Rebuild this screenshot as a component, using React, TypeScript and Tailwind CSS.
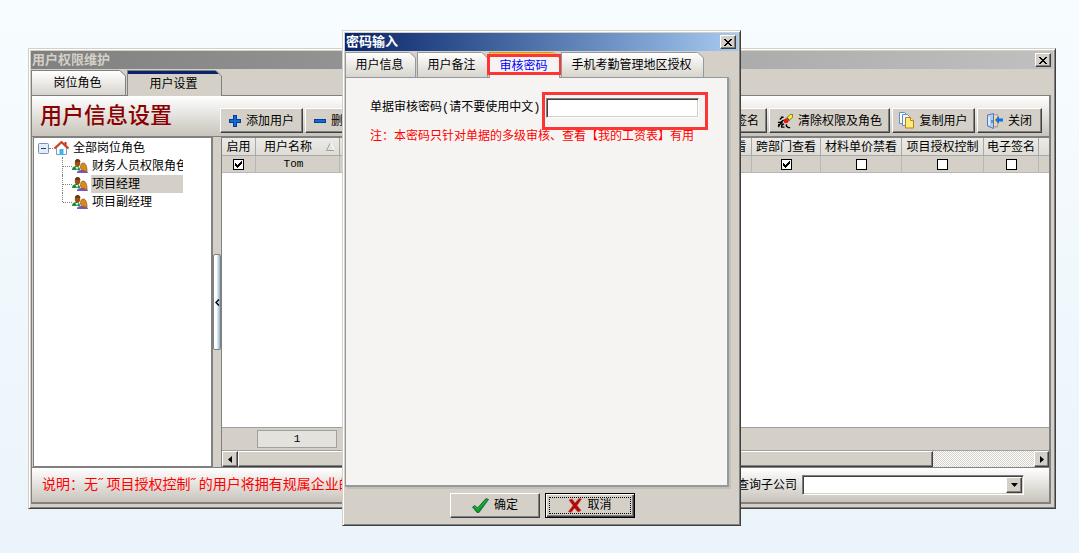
import type { ReactNode } from "react";

type Column = {
  label: string;
  width: string;
  checked?: boolean;
};

const rightColumns: Column[] = [
  { label: "跨部门查看", width: "w-[69px]", checked: true },
  { label: "材料单价禁看", width: "w-[81px]", checked: false },
  { label: "项目授权控制", width: "w-[82px]", checked: false },
  { label: "电子签名", width: "w-[55px]", checked: false },
];

const roles = [
  { name: "财务人员权限角色", selected: false },
  { name: "项目经理", selected: true },
  { name: "项目副经理", selected: false },
];

const raised =
  "border border-t-white border-l-white border-r-[#404040] border-b-[#404040] bg-[#d4d0c8] shadow-[inset_-1px_-1px_0_#808080]";
const frame =
  "border border-t-[#d4d0c8] border-l-[#d4d0c8] border-r-[#404040] border-b-[#404040] bg-[#d4d0c8] shadow-[inset_1px_1px_0_#fff,inset_-1px_-1px_0_#808080]";
const sunken =
  "border border-t-[#808080] border-l-[#808080] border-r-white border-b-white bg-white shadow-[inset_1px_1px_0_#404040,inset_-1px_-1px_0_#d4d0c8]";

function CloseButton({ label }: { label: string }) {
  return (
    <button
      aria-label={label}
      className={`flex h-[14px] w-4 items-center justify-center ${raised}`}
    >
      <svg width="8" height="7" viewBox="0 0 8 7" shapeRendering="crispEdges">
        <path
          d="M0 0h2v1h1v1h2v-1h1v-1h2v1h-1v1h-1v1h-1v1h1v1h1v1h1v1h-2v-1h-1v-1h-2v1h-1v1h-2v-1h1v-1h1v-1h1v-1h-1v-1h-1v-1h-1z"
          fill="#000"
        />
      </svg>
    </button>
  );
}

function Tab({
  children,
  width,
  line,
  active,
  fill,
}: {
  children: ReactNode;
  width: string;
  line: string;
  active?: string;
  fill?: string;
}) {
  return (
    <button
      role="tab"
      aria-selected={!!active}
      className={`relative border-x border-t pr-[2px] text-xs ${width} ${line} ${
        active
          ? `h-[26px] ${active}`
          : "h-[25px] bg-linear-to-b from-white to-[#d8d4cd]"
      }`}
    >
      {children}
      <svg
        className="absolute -top-px -right-px"
        width="7"
        height="7"
        viewBox="0 0 7 7"
      >
        <path d="M0 0h7v7z" fill="#d4d0c8" />
        <path d="M1 0.5L6.5 6V7" stroke={fill} fill="none" />
      </svg>
    </button>
  );
}

function ToolButton({
  icon,
  label,
  width,
}: {
  icon: ReactNode;
  label: string;
  width: string;
}) {
  return (
    <button
      className={`flex h-[25px] shrink-0 items-center justify-center gap-[5px] text-xs whitespace-nowrap ${width} ${raised}`}
    >
      {icon}
      {label}
    </button>
  );
}

function PlusIcon() {
  return (
    <svg width="12" height="12" viewBox="0 0 12 12" shapeRendering="crispEdges">
      <path
        d="M4.500 .5h3v4h4v3h-4v4h-3v-4h-4v-3h4z"
        fill="#0a6cdc"
        stroke="#0a3c96"
      />
    </svg>
  );
}

function MinusIcon() {
  return (
    <svg width="12" height="12" viewBox="0 0 12 12" shapeRendering="crispEdges">
      <path d="M.5 4.500h11v3h-11z" fill="#0a6cdc" stroke="#0a3c96" />
    </svg>
  );
}

function EraserIcon() {
  return (
    <svg width="16" height="16" viewBox="0 0 17 16">
      <path d="M9.500 5.500L14 1h2.500v3L11.500 9z" fill="#ffee10" stroke="#333" strokeWidth=".6" />
      <path d="M10.500 4.500l2.500 3" stroke="#555" strokeWidth="1.500" />
      <circle cx="9.500" cy="8" r="2.500" fill="#f01010" />
      <path
        d="M4 4h3M3 6.500l2-2M1 9.500h3l3-2.500M6 9.500l-3 2-1.500 3M7.500 11l-2.500 1.500v2h3M10 11.500v2l2 1.500h2M1 12h1"
        stroke="#000"
        strokeWidth="1.500"
        fill="none"
      />
    </svg>
  );
}

function CopyIcon() {
  return (
    <svg width="15" height="17" viewBox="0 0 15 17">
      <path d="M.5 .5h5l2 2v9h-7z" fill="#fff" stroke="#5b93c8" />
      <path d="M3.500 2.500h5l2 2v9h-7z" fill="#eef6ff" stroke="#5b93c8" />
      <path d="M6.500 5.500h5l3 3v7.500h-8z" fill="#ffea78" stroke="#b98014" />
      <path d="M11.500 5.500v3h3" fill="#fff6c4" stroke="#b98014" />
    </svg>
  );
}

function ExitIcon() {
  return (
    <svg width="16" height="16" viewBox="0 0 16 16">
      <path d="M4 1.500h6.500v12H4z" fill="#f5d58c" stroke="#9aa6d8" />
      <path d="M.5 2L6.500 .5v15L.5 13z" fill="#a8d0f4" stroke="#5c74c0" />
      <path d="M2 3.500v8.500" stroke="#eef8ff" strokeWidth="1.500" />
      <path d="M5 7v3" stroke="#3c4c90" />
      <path d="M8 7l4-4v2.500h4v3h-4V11z" fill="#1070e0" />
      <path d="M8 14h3" stroke="#d0a050" />
    </svg>
  );
}

function SignIcon() {
  return (
    <svg width="14" height="14" viewBox="0 0 14 14">
      <path d="M1 13l2-4 8-8 2 2-8 8z" fill="#ffd24a" stroke="#805010" />
    </svg>
  );
}

function HouseIcon() {
  return (
    <svg width="15" height="14" viewBox="0 0 15 14">
      <path d="M2.500 7v6.500h10V7L7.500 2z" fill="#fff" stroke="#7a9cc0" />
      <path d="M5.500 8h4v6h-4z" fill="#38b4f0" />
      <path d="M10.500 1h2v4h-2z" fill="#c03020" />
      <path d="M.5 7.500l7-6.500 7 6.500" stroke="#e03c18" strokeWidth="2" fill="none" />
    </svg>
  );
}

function UsersIcon() {
  return (
    <svg width="16" height="15" viewBox="0 0 16 15">
      <path d="M5 14c0-2 1-3 5-3s6 1 6 3z" fill="#7058d0" />
      <path d="M8.500 9c0-4 1-5 3-5s3.500 3 3.500 8l-2 1-1-2-2 1z" fill="#d88a20" stroke="#8c5010" strokeWidth=".7" />
      <path d="M0 11c0-3 2-4 4.500-4S8 9 8 11z" fill="#189030" />
      <path d="M3.500 8l1.500 3 1.500-3z" fill="#e8f4e8" />
      <ellipse cx="5.500" cy="4" rx="2.700" ry="3.700" fill="#9a4e18" />
      <path d="M3 3c0-4 5-4 5.500 0z" fill="#6c3810" />
    </svg>
  );
}

function CheckIcon() {
  return (
    <svg width="17" height="15" viewBox="0 0 17 15">
      <path d="M.5 9l2.500-1.500 2.500 2.500L14 .5l2.500 1L7 14.500H5z" fill="#0a9a14" stroke="#0c3c80" strokeWidth=".7" />
      <path d="M2 8.500l3.500 3L15 1.500" stroke="#20c820" fill="none" />
    </svg>
  );
}

function CrossIcon() {
  return (
    <svg width="14" height="15" viewBox="0 0 14 15">
      <path
        d="M1 2l3-1 3 4 4-4.500 2.500 .5L9 7.500l4 5-3 1.500-3.500-4L3 14.500l-2.500-1L5 7.500z"
        fill="#a80c0c"
        stroke="#e03828"
        strokeWidth=".7"
      />
    </svg>
  );
}

function GridCheck({ label, checked }: { label: string; checked?: boolean }) {
  return (
    <span className="relative mx-auto block size-[11px]">
      <input
        type="checkbox"
        aria-label={label}
        defaultChecked={checked}
        className="peer block size-[11px] appearance-none border border-black bg-white"
      />
      <svg
        className="pointer-events-none absolute inset-0 hidden peer-checked:block"
        width="11"
        height="11"
        viewBox="0 0 11 11"
        shapeRendering="crispEdges"
      >
        <path
          d="M2 4h1v1h1v1h1v-1h1v-1h1v-1h1v-1h1v3h-1v1h-1v1h-1v1h-1v1h-1v-1h-1v-1h-1z"
          fill="#000"
        />
      </svg>
    </span>
  );
}

function RoleTree() {
  return (
    <div className="ml-px w-[180px] shrink-0 border border-r-2 border-[#808080] bg-white pt-px text-xs leading-[18px]">
      <div className="flex h-[18px] items-center pl-1">
        <svg width="11" height="11" viewBox="0 0 11 11">
          <rect x=".5" y=".5" width="10" height="10" rx="1" fill="#e4ecf6" stroke="#7890b4" />
          <path d="M3 5.500h5" stroke="#203c78" />
        </svg>
        <span className="mr-px w-1 border-t border-dotted border-[#808080]" />
        <HouseIcon />
        <span className="ml-1">全部岗位角色</span>
      </div>
      <ul className="ml-7">
        {roles.map((role, idx) => (
          <li key={role.name} className="flex h-[18px] items-center">
            <span
              className={`w-px self-start border-l border-dotted border-[#808080] ${
                idx === roles.length - 1 ? "h-[9px]" : "h-[18px]"
              }`}
            />
            <span className="w-[9px] border-t border-dotted border-[#808080]" />
            <UsersIcon />
            <span
              className={`ml-[3px] w-[92px] overflow-hidden pl-px whitespace-nowrap ${
                role.selected ? "bg-[#d4d0c8]" : ""
              }`}
            >
              {role.name}
            </span>
          </li>
        ))}
      </ul>
    </div>
  );
}

function Splitter() {
  return (
    <div className="flex w-2 shrink-0 items-center bg-[#d4d0c8]">
      <button
        aria-label="折叠"
        className="flex h-24 w-2 items-center justify-center rounded-xs border border-[#808080] bg-linear-to-r from-white from-40% to-[#8cb4cc]"
      >
        <svg width="5" height="7" viewBox="0 0 5 7">
          <path d="M4 0.500L1 3.500l3 3" stroke="#000" strokeWidth="1.500" fill="none" />
        </svg>
      </button>
    </div>
  );
}

function UserGrid() {
  const head =
    "h-[18px] overflow-hidden border-r border-[#a8a8a8] p-0 text-center font-normal whitespace-nowrap";
  const cell = "h-[17px] border-r border-b border-[#b8b8b8] p-0 text-center";
  return (
    <div className="flex min-w-0 flex-1 flex-col border-t border-l border-[#808080] bg-white">
      <table className="w-full table-fixed border-separate border-spacing-0 text-xs leading-4">
        <thead className="bg-linear-to-b from-[#ecebe7] to-[#dedbd5]">
          <tr>
            <th className={`w-[34px] border-b ${head}`}>启用</th>
            <th className={`w-[84px] border-b ${head}`}>
              <span className="flex items-center justify-between pr-1 pl-2">
                用户名称
                <svg width="9" height="9" viewBox="0 0 9 9">
                  <path d="M4.500 .5L.5 8.500h8" stroke="#a0a0a0" fill="none" />
                  <path d="M8.500 8.500l-4-8" stroke="#fff" fill="none" />
                </svg>
              </span>
            </th>
            <th className={`border-b ${head}`} />
            <th className={`w-[70px] border-b ${head}`}>跨公司查看</th>
            {rightColumns.map((col) => (
              <th key={col.label} className={`border-b ${head} ${col.width}`}>
                {col.label}
              </th>
            ))}
            <th className="w-[10px] border-b border-[#a8a8a8] p-0" />
          </tr>
        </thead>
        <tbody className="bg-[#d4d0c8]">
          <tr>
            <td className={cell}>
              <GridCheck label="启用" checked />
            </td>
            <td className={`${cell} pr-2 font-['Liberation_Mono',monospace] text-[11px]`}>
              Tom
            </td>
            <td className={cell} />
            <td className={cell} />
            {rightColumns.map((col) => (
              <td key={col.label} className={cell}>
                <GridCheck label={col.label} checked={col.checked} />
              </td>
            ))}
            <td className="border-b border-[#b8b8b8] p-0" />
          </tr>
        </tbody>
      </table>

      {/* Record count */}
      <div className="mt-auto flex h-6 items-center border-y border-[#a0a0a0] bg-[#d4d0c8] pl-[35px]">
        <span className="h-[18px] w-20 border border-[#a0a0a0] bg-[#e4e2dc] text-center font-['Liberation_Mono',monospace] text-[11px] leading-4">
          1
        </span>
      </div>

      {/* Horizontal scrollbar */}
      <div className="flex h-4 bg-[repeating-conic-gradient(#d4d0c8_0_25%,#fff_0_50%)] bg-size-[2px_2px]">
        <button
          aria-label="向左滚动"
          className={`flex w-4 items-center justify-center ${raised}`}
        >
          <svg width="4" height="7" viewBox="0 0 4 7">
            <path d="M4 0v7L0 3.500z" />
          </svg>
        </button>
        <div className={`mr-[101px] flex-1 ${raised}`} />
        <button
          aria-label="向右滚动"
          className={`flex w-[15px] items-center justify-center ${raised}`}
        >
          <svg width="4" height="7" viewBox="0 0 4 7">
            <path d="M0 0v7l4-3.500z" />
          </svg>
        </button>
      </div>
    </div>
  );
}

function PasswordDialog() {
  return (
    <div
      role="dialog"
      aria-label="密码输入"
      className={`absolute top-[30px] left-[342px] z-20 flex h-[496px] w-[399px] flex-col p-[2px] ${frame}`}
    >
      <div className="flex h-[18px] shrink-0 items-center justify-between bg-linear-to-r from-[#0a246a] to-[#a6caf0] pr-[2px] text-[13px] leading-[18px] font-bold text-white">
        <h2 className="pl-px">密码输入</h2>
        <CloseButton label="关闭密码输入" />
      </div>

      <div role="tablist" className="relative z-10 flex h-[26px] shrink-0 items-end gap-px">
        <Tab width="w-[71px]" line="border-[#919b9c]" fill="#919b9c">
          用户信息
        </Tab>
        <Tab width="w-[71px]" line="border-[#919b9c]" fill="#919b9c">
          用户备注
        </Tab>
        <div className="relative -mb-px h-[26px]">
          <Tab
            width="w-[71px]"
            line="border-x-[#919b9c] border-t-[#e68b2c]"
            fill="#919b9c"
            active="bg-[#f6f4f2] text-[#0000ff] shadow-[inset_0_2px_0_#ffc73c]"
          >
            审核密码
          </Tab>
          <span className="pointer-events-none absolute -inset-x-[2px] top-[2px] h-[21px] border-3 border-[#fc3535]" />
        </div>
        <Tab width="w-[143px]" line="border-[#919b9c]" fill="#919b9c">
          手机考勤管理地区授权
        </Tab>
      </div>

      <div className="mr-[9px] flex-1 border border-r-2 border-b-2 border-[#919b9c] bg-[#f6f4f2] pt-5 pl-6 text-xs shadow-[2px_2px_0_#c4c0b8]">
        <div className="flex items-center">
          <label
            htmlFor="audit-password"
            className="w-44 font-['Liberation_Mono','Noto_Sans_CJK_SC',monospace] whitespace-nowrap"
          >
            单据审核密码(请不要使用中文)
          </label>
          <div className="relative">
            <input
              id="audit-password"
              type="password"
              className={`block h-5 w-[153px] px-1 outline-none ${sunken}`}
            />
            <span className="pointer-events-none absolute -top-[6px] -right-[9px] -bottom-3 -left-1 border-3 border-[#fc3535]" />
          </div>
        </div>
        <p className="mt-[10px] leading-4 whitespace-nowrap text-[#ff0000]">
          注：本密码只针对单据的多级审核、查看【我的工资表】有用
        </p>
      </div>

      <div className="flex h-9 shrink-0 items-center justify-center gap-[5px] pl-[2px] text-xs">
        <button className={`flex h-[25px] w-[90px] items-center justify-center gap-[5px] ${raised}`}>
          <CheckIcon />
          确定
        </button>
        <button className="h-[25px] w-[90px] border border-black bg-[#d4d0c8] p-[3px] shadow-[inset_1px_1px_0_#fff,inset_-1px_-1px_0_#404040,inset_-2px_-2px_0_#808080]">
          <span className="flex h-full items-center justify-center gap-[5px] border border-dotted border-black">
            <CrossIcon />
            取消
          </span>
        </button>
      </div>
    </div>
  );
}

export default function App() {
  return (
    <div className="relative flex h-screen min-h-[540px] flex-col bg-linear-to-b from-[#f7fcff] to-[#ebf4fa] pt-12 pr-[23px] pb-11 pl-7 font-['Liberation_Sans','Noto_Sans_CJK_SC',sans-serif] text-black">
      <div className={`flex min-h-0 flex-1 flex-col p-[2px] ${frame}`}>
        <div className="flex h-[18px] shrink-0 items-center justify-between bg-linear-to-r from-[#808080] to-[#c0c0c0] pr-[2px] text-[13px] leading-[18px] font-bold text-[#d4d0c8]">
          <h1 className="pl-px">用户权限维护</h1>
          <CloseButton label="关闭窗口" />
        </div>

        <div role="tablist" className="relative flex h-[26px] shrink-0 items-end gap-px">
          <Tab width="w-[95px]" line="border-[#808080]" fill="#808080">
            岗位角色
          </Tab>
          <Tab
            width="w-[95px]"
            line="border-[#808080]"
            fill="#808080"
            active="-mb-px z-10 bg-[#d4d0c8] shadow-[inset_0_3px_0_#0a246a]"
          >
            用户设置
          </Tab>
        </div>

        <div className="mr-[2px] mb-[2px] flex min-h-0 flex-1 flex-col border border-r-2 border-b-2 border-[#808080]">
          <header className="flex h-10 shrink-0 items-end justify-between bg-linear-to-b from-white to-[#c8c4bc] pr-[7px] pb-[3px]">
            <div className="flex items-end">
              <h2 className="w-[188px] self-center pl-2 text-[22px] leading-[34px] font-medium whitespace-nowrap text-[#8b0000]">
                用户信息设置
              </h2>
              <div className="flex gap-[2px]">
                <ToolButton width="w-[83px]" icon={<PlusIcon />} label="添加用户" />
                <ToolButton width="w-[83px]" icon={<MinusIcon />} label="删除用户" />
              </div>
            </div>
            <div className="flex gap-[2px]">
              <ToolButton width="w-[83px]" icon={<SignIcon />} label="电子签名" />
              <ToolButton width="w-[121px]" icon={<EraserIcon />} label="清除权限及角色" />
              <ToolButton width="w-[83px]" icon={<CopyIcon />} label="复制用户" />
              <ToolButton width="w-[65px]" icon={<ExitIcon />} label="关闭" />
            </div>
          </header>

          <div className="flex min-h-0 flex-1 border-y border-[#808080]">
            <RoleTree />
            <Splitter />
            <UserGrid />
          </div>

          <footer className="flex h-[34px] shrink-0 items-center justify-between bg-linear-to-b from-white to-[#c8c4bc] pr-[25px] pl-[10px]">
            <p className="font-['Liberation_Mono','Noto_Sans_CJK_SC',monospace] text-sm whitespace-nowrap text-[#ff0000]">
              说明：无˝项目授权控制˝的用户将拥有规属企业的
            </p>
            <div className="flex items-center gap-[5px] text-xs">
              <label htmlFor="company">查询子公司</label>
              <div className="relative">
                <select
                  id="company"
                  className={`block h-5 w-[222px] appearance-none px-1 outline-none ${sunken}`}
                >
                  <option value="" />
                </select>
                <span
                  className={`pointer-events-none absolute top-[2px] right-[2px] flex h-4 w-4 items-center justify-center ${raised}`}
                >
                  <svg width="7" height="4" viewBox="0 0 7 4">
                    <path d="M0 0h7L3.500 4z" />
                  </svg>
                </span>
              </div>
            </div>
          </footer>
        </div>
      </div>

      <PasswordDialog />
    </div>
  );
}
